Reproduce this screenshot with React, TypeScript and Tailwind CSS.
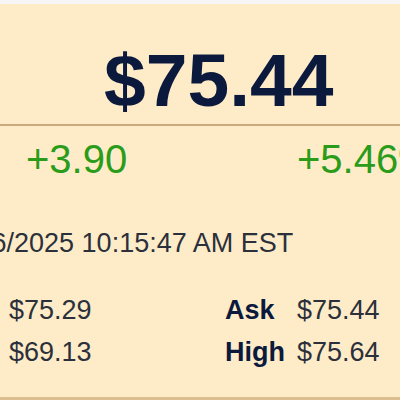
export default function App() {
  const rows = [
    { l1: 'Bid', v1: '$75.29', l2: 'Ask', v2: '$75.44' },
    { l1: 'Low', v1: '$69.13', l2: 'High', v2: '$75.64' },
  ];

  return (
    <div className="w-[400px] h-[400px] overflow-hidden bg-[#f6f6f6] pt-[4px] font-['Liberation_Sans',Arial,sans-serif]">
      <div className="h-[396px] bg-[#feecc9] border-b-[3px] border-[#dcbd90] flex flex-col">
        <div className="h-[122px] shrink-0 border-b-2 border-[#caa97c] pt-[39px] pl-[104px]">
          <div className="text-[75px] leading-none font-bold text-[#0b1a3c] whitespace-nowrap">$75.44</div>
        </div>

        <div className="mt-[13px] flex pl-[26px] text-[40px] leading-none text-[#2a9c1a] whitespace-nowrap">
          <span className="w-[271px] shrink-0">+3.90</span>
          <span>+5.46%</span>
        </div>

        <div className="mt-[51px] ml-[-31px] text-[27px] leading-none text-[#2b303b] whitespace-nowrap">
          1/6/2025 10:15:47 AM EST
        </div>

        <div className="mt-[40px] ml-[-60px] flex flex-col text-[27px] leading-none text-[#2b303b]">
          {rows.map((r) => (
            <div key={r.l1} className="h-[42px] grid grid-cols-[69px_216px_72px_auto] whitespace-nowrap">
              <span className="font-bold text-[#0b1a3c]">{r.l1}</span>
              <span>{r.v1}</span>
              <span className="font-bold text-[#0b1a3c]">{r.l2}</span>
              <span>{r.v2}</span>
            </div>
          ))}
        </div>
      </div>
    </div>
  );
}
